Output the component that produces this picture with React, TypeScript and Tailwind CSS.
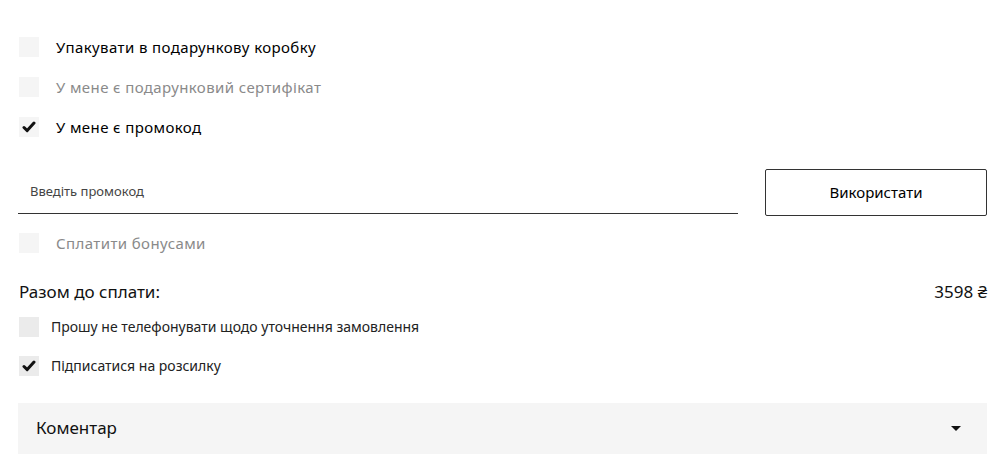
import { useState } from 'react';

const font = { fontFamily: "'Noto Sans', 'Liberation Sans', sans-serif" };

function Check({ checked, dark }: { checked: boolean; dark?: boolean }) {
    return (
        <span className={`w-5 h-5 shrink-0 flex items-center justify-center ${dark ? 'bg-[#ebebeb]' : 'bg-[#f5f5f5]'}`}>
            {checked && (
                <svg width="14" height="12" viewBox="0 0 14 12">
                    <path d="M2 6.5 L5.2 9.6 L12 2" fill="none" stroke="#111" strokeWidth="3" strokeLinecap="round" strokeLinejoin="round" />
                </svg>
            )}
        </span>
    );
}

function Option({ label, checked, disabled, onClick }: { label: string; checked: boolean; disabled?: boolean; onClick?: () => void }) {
    return (
        <label onClick={onClick} className="flex items-center gap-[17px] h-5 cursor-pointer">
            <Check checked={checked} />
            <span className={`text-[15px] tracking-[0.4px] ${disabled ? 'text-[#8a8a8a]' : 'text-black'}`}>{label}</span>
        </label>
    );
}

export default function App() {
    const [promo, setPromo] = useState(true);
    const [subscribe, setSubscribe] = useState(true);
    const [noCall, setNoCall] = useState(false);

    return (
        <div className="w-[1000px] h-[466px] bg-white pl-[19px] pr-[13px] pt-[37px]" style={font}>
            <div className="flex flex-col gap-5">
                <Option label="Упакувати в подарункову коробку" checked={false} />
                <Option label="У мене є подарунковий сертифікат" checked={false} disabled />
                <Option label="У мене є промокод" checked={promo} onClick={() => setPromo(!promo)} />
            </div>

            <div className="flex items-end justify-between mt-[31px] -ml-px">
                <div className="w-[720px] h-[46px] border-b border-[#333] flex items-center pl-3 pt-[3px]">
                    <span className="text-[13px] text-[#444]">Введіть промокод</span>
                </div>
                <button className="w-[222px] h-[47px] border border-[#333] rounded-[2px] text-[15px] text-black mb-[-2px]">
                    Використати
                </button>
            </div>

            <div className="mt-[19px]">
                <Option label="Сплатити бонусами" checked={false} disabled />
            </div>

            <div className="flex justify-between items-center mt-[26px] text-[17px] text-[#111]">
                <span>Разом до сплати:</span>
                <span>3598 ₴</span>
            </div>

            <div className="flex flex-col gap-[19px] mt-3">
                <label onClick={() => setNoCall(!noCall)} className="flex items-center gap-3 h-5 cursor-pointer">
                    <Check checked={noCall} dark />
                    <span className="text-[14px] text-[#222]">Прошу не телефонувати щодо уточнення замовлення</span>
                </label>
                <label onClick={() => setSubscribe(!subscribe)} className="flex items-center gap-3 h-5 cursor-pointer">
                    <Check checked={subscribe} dark />
                    <span className="text-[14px] text-[#222]">Підписатися на розсилку</span>
                </label>
            </div>

            <div className="mt-[27px] -ml-px h-[51px] bg-[#f5f5f5] flex items-center justify-between pl-[18px] pr-[26px]">
                <span className="text-[17px] text-[#111]">Коментар</span>
                <svg width="10" height="5" viewBox="0 0 10 5">
                    <path d="M0 0 H10 L5 5 Z" fill="#111" />
                </svg>
            </div>
        </div>
    );
}
